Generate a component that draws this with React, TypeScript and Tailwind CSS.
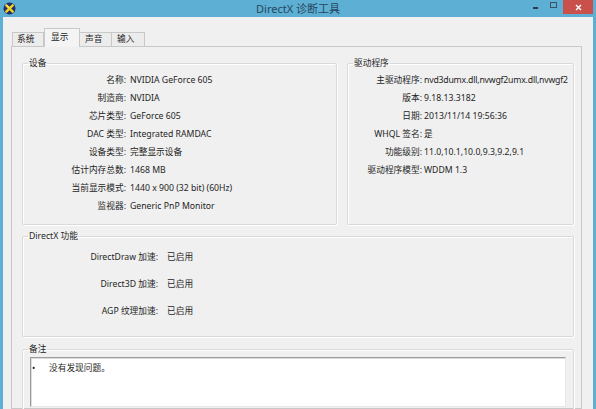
import React from "react";

const devRows: [string, string][] = [
  ["名称:", "NVIDIA GeForce 605"],
  ["制造商:", "NVIDIA"],
  ["芯片类型:", "GeForce 605"],
  ["DAC 类型:", "Integrated RAMDAC"],
  ["设备类型:", "完整显示设备"],
  ["估计内存总数:", "1468 MB"],
  ["当前显示模式:", "1440 x 900 (32 bit) (60Hz)"],
  ["监视器:", "Generic PnP Monitor"],
];

const drvRows: [string, string][] = [
  ["主驱动程序:", "nvd3dumx.dll,nvwgf2umx.dll,nvwgf2"],
  ["版本:", "9.18.13.3182"],
  ["日期:", "2013/11/14 19:56:36"],
  ["WHQL 签名:", "是"],
  ["功能级别:", "11.0,10.1,10.0,9.3,9.2,9.1"],
  ["驱动程序模型:", "WDDM 1.3"],
];

const dxRows: [string, string][] = [
  ["DirectDraw 加速:", "已启用"],
  ["Direct3D 加速:", "已启用"],
  ["AGP 纹理加速:", "已启用"],
];

function Group({
  label,
  className,
  children,
}: {
  label: string;
  className: string;
  children?: React.ReactNode;
}) {
  return (
    <fieldset
      className={
        "border border-[#d9d9d9] rounded-[2px] shadow-[inset_1px_1px_0_#ffffff,1px_1px_0_#ffffff] " +
        className
      }
    >
      <legend className="ml-[5px] px-[1px] leading-[12px] text-[#1e1e1e]">{label}</legend>
      {children}
    </fieldset>
  );
}

function DxIcon() {
  return (
    <svg width="13" height="13" viewBox="0 0 13 13">
      <circle cx="6.5" cy="6.5" r="6" fill="#1f2f6e" />
      <path d="M3.3 3.3 L9.7 9.7 M9.7 3.3 L3.3 9.7" stroke="#f4d21c" strokeWidth="2.4" strokeLinecap="round" />
      <path d="M3.6 3.2 L6 5.6" stroke="#fff6a8" strokeWidth="0.8" strokeLinecap="round" />
    </svg>
  );
}

export default function App() {
  return (
    <div className="w-[596px] h-[409px] overflow-hidden bg-[#5eafd4] flex flex-col text-[8.7px] text-[#1e1e1e] [font-family:'Noto_Sans','Noto_Sans_CJK_SC',sans-serif]">
      {/* Title bar */}
      <div className="h-[17px] px-[3px] grid grid-cols-[1fr_auto_1fr] items-start shrink-0">
        <div className="pt-[2px]">
          <DxIcon />
        </div>
        <div className="pt-[1px] text-[11px] leading-[15px] text-[#26475e]">DirectX 诊断工具</div>
        <div className="flex justify-end">
          <div className="w-[18px] h-[14px] flex items-center justify-center">
            <div className="w-[5px] h-[2px] bg-[#2c3e4c] mt-[1px]" />
          </div>
          <div className="w-[18px] h-[14px] flex items-start justify-center pt-[2px]">
            <div className="w-[7px] h-[6px] border border-[#3a5262]" />
          </div>
          <div className="w-[30px] h-[14px] bg-[#c9504b] flex items-center justify-center ml-[1px]">
            <svg width="7" height="7" viewBox="0 0 7 7">
              <path d="M1 1 L6 6 M6 1 L1 6" stroke="#ffffff" strokeWidth="1.4" />
            </svg>
          </div>
        </div>
      </div>

      {/* Client area */}
      <div className="flex-1 mx-[3px] bg-[#f0f0f0] pt-[11px] pl-[8px] pr-[11px] flex flex-col min-h-0">
        {/* Tabs */}
        <div className="h-[18px] flex items-end pl-[1px] shrink-0">
          <div className="w-[32px] h-[14px] border border-b-0 border-[#c8c8c8] bg-[#ececec] pl-[4px] leading-[13px]">系统</div>
          <div className="w-[36px] h-[19px] border border-b-0 border-[#c8c8c8] bg-[#f4f4f4] pl-[6px] leading-[16px] relative z-10 -mb-[1px]">
            显示
          </div>
          <div className="w-[32px] h-[14px] border border-b-0 border-l-0 border-[#c8c8c8] bg-[#ececec] pl-[5px] leading-[13px]">声音</div>
          <div className="w-[33px] h-[14px] border border-b-0 border-l-0 border-[#c8c8c8] bg-[#ececec] pl-[5px] leading-[13px]">输入</div>
        </div>

        {/* Tab panel */}
        <div className="flex-1 border border-[#c8c8c8] bg-[#f0f0f0] pt-[10px] pl-[10px] pr-[7px] flex flex-col min-h-0">
          <div className="flex gap-[10px] shrink-0">
            <Group label="设备" className="w-[315px] shrink-0 h-[168px]">
              <div className="pt-[2px] grid grid-cols-[103px_1fr] gap-x-[4px]">
                {devRows.map(([k, v]) => (
                  <React.Fragment key={k}>
                    <div className="h-[18px] leading-[18px] text-right whitespace-nowrap">{k}</div>
                    <div className="h-[18px] leading-[18px] whitespace-nowrap">{v}</div>
                  </React.Fragment>
                ))}
              </div>
            </Group>
            <Group label="驱动程序" className="flex-1 min-w-0 h-[168px] overflow-hidden">
              <div className="pt-[2px] grid grid-cols-[74px_1fr] gap-x-[2px]">
                {drvRows.map(([k, v], i) => (
                  <React.Fragment key={k}>
                    <div className="h-[18px] leading-[18px] text-right whitespace-nowrap">{k}</div>
                    <div
                      className={
                        i === 0
                          ? "h-[18px] leading-[18px] whitespace-nowrap tracking-[-0.2px]"
                          : "h-[18px] leading-[18px] whitespace-nowrap"
                      }
                    >
                      {v}
                    </div>
                  </React.Fragment>
                ))}
              </div>
            </Group>
          </div>

          <Group label="DirectX 功能" className="mt-[5px] h-[107px] shrink-0">
            <div className="pt-[2px] grid grid-cols-[135px_1fr] gap-x-[9px]">
              {dxRows.map(([k, v]) => (
                <React.Fragment key={k}>
                  <div className="h-[27px] leading-[27px] text-right whitespace-nowrap">{k}</div>
                  <div className="h-[27px] leading-[27px] whitespace-nowrap">{v}</div>
                </React.Fragment>
              ))}
            </div>
          </Group>

          <Group label="备注" className="mt-[6px] h-[80px] shrink-0">
            <div className="mt-[2px] mx-[7px] h-[50px] bg-white border-t border-l border-[#9c9c9c] border-r border-b border-r-[#e8e8e8] border-b-[#e8e8e8] shadow-[inset_1px_1px_0_#dcdcdc] flex items-start pt-[4px] pl-[1px]">
              <span className="w-[17px] leading-[12px]">•</span>
              <span className="leading-[12px]">没有发现问题。</span>
            </div>
          </Group>
        </div>
      </div>
    </div>
  );
}
